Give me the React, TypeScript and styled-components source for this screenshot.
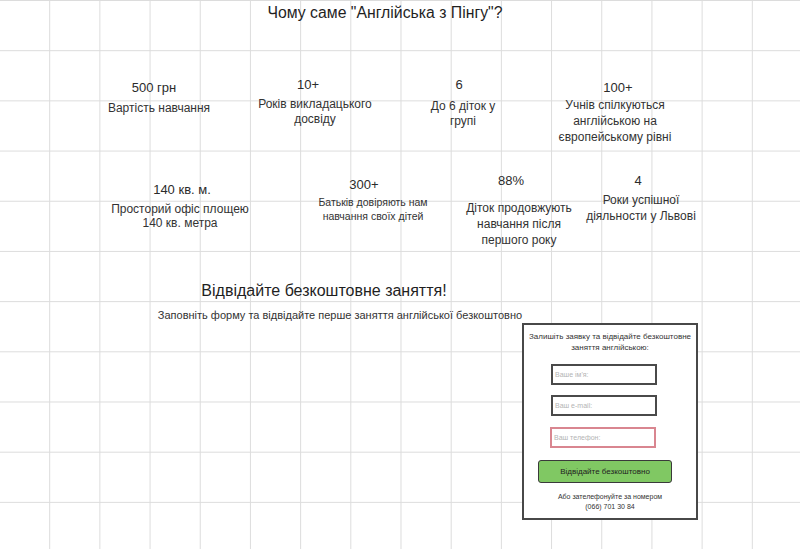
import styled, { createGlobalStyle } from 'styled-components';

const GlobalStyle = createGlobalStyle`
  html, body {
    margin: 0;
    padding: 0;
  }

  body {
    min-height: 100vh;
    font-family: "Liberation Sans", Arial, sans-serif;
    color: #2b2b2b;
    background-color: #ffffff;
    background-image:
      linear-gradient(to right, #dcdcdc 1px, transparent 1px),
      linear-gradient(to bottom, #dcdcdc 1px, transparent 1px);
    background-size: 50.2px 50.2px;
    background-position: -1px 0, 0 0;
  }
`;

const Page = styled.div`
  width: 800px;
  padding-top: 3px;
`;

const Title = styled.h1`
  width: 770px;
  margin: 0;
  font-size: 15.8px;
  font-weight: normal;
  line-height: 19px;
  text-align: center;
  color: #1f1f1f;
`;

const StatsRow = styled.div<{ $top: number }>`
  display: flex;
  align-items: flex-start;
  height: 100px;
  margin-top: ${(p) => p.$top}px;
`;

const Stat = styled.div<{ $w: number; $ml: number; $mt: number }>`
  width: ${(p) => p.$w}px;
  margin-left: ${(p) => p.$ml}px;
  margin-top: ${(p) => p.$mt}px;
  text-align: center;
`;

// $nudge moves the figure off the label's centre (negative = left)
const Value = styled.div<{ $nudge?: number }>`
  padding-left: ${(p) => Math.max(0, (p.$nudge ?? 0) * 2)}px;
  padding-right: ${(p) => Math.max(0, -(p.$nudge ?? 0) * 2)}px;
  font-size: 13px;
  line-height: 16px;
  color: #2b2b2b;
`;

const Label = styled.div<{ $gap: number; $size?: number; $lh?: number }>`
  margin-top: ${(p) => p.$gap}px;
  font-size: ${(p) => p.$size ?? 12}px;
  line-height: ${(p) => p.$lh ?? 15}px;
  color: #333;
`;

const Heading = styled.h2`
  width: 648px;
  margin: 11px 0 0;
  font-size: 16px;
  font-weight: normal;
  line-height: 20px;
  text-align: center;
  color: #1f1f1f;
`;

const Subtitle = styled.p`
  width: 680px;
  margin: 7.5px 0 0;
  font-size: 11px;
  line-height: 13px;
  text-align: center;
  color: #333;
`;

const FormBox = styled.form`
  box-sizing: border-box;
  width: 176px;
  margin: 1.5px 0 0 522px;
  padding: 5.5px 0 6px;
  border: 2px solid #484848;
  background: #ffffff;
  display: flex;
  flex-direction: column;
  align-items: flex-start;
`;

const FormNote = styled.p`
  align-self: stretch;
  margin: 0;
  padding: 0 3px;
  font-size: 8px;
  line-height: 11px;
  text-align: center;
  color: #333;
`;

const Field = styled.input<{ $mt: number; $ml: number; $invalid?: boolean }>`
  box-sizing: border-box;
  width: 106px;
  height: 21px;
  margin: ${(p) => p.$mt}px 0 0 ${(p) => p.$ml}px;
  padding: 0 2px;
  border: 2px solid ${(p) => (p.$invalid ? '#d98690' : '#4a4a4a')};
  border-radius: 0;
  background: #fff;
  font-family: "Liberation Sans", Arial, sans-serif;
  font-size: 7px;
  outline: none;

  &::placeholder {
    color: #b4b4b4;
  }
`;

const SubmitButton = styled.button`
  box-sizing: border-box;
  width: 134px;
  height: 23px;
  margin: 12px 0 0 14px;
  padding: 0;
  border: 1px solid #3a3a3a;
  border-radius: 3px;
  background: #80c863;
  font-family: "Liberation Sans", Arial, sans-serif;
  font-size: 8px;
  color: #222;
`;

const CallNote = styled.p`
  align-self: stretch;
  margin: 9px 0 0;
  font-size: 7px;
  line-height: 10px;
  text-align: center;
  color: #333;
`;

const App = (): JSX.Element => {
  return (
    <>
      <GlobalStyle />
      <Page>
        <Title>Чому саме "Англійська з Пінгу"?</Title>

        <StatsRow $top={48}>
          <Stat $w={130} $ml={94} $mt={10}>
            <Value $nudge={-5}>500 грн</Value>
            <Label $gap={4.5}>Вартість навчання</Label>
          </Stat>
          <Stat $w={120} $ml={31} $mt={7}>
            <Value $nudge={-7}>10+</Value>
            <Label $gap={4}>Років викладацького досвіду</Label>
          </Stat>
          <Stat $w={70} $ml={53} $mt={7}>
            <Value $nudge={-4}>6</Value>
            <Label $gap={6}>До 6 діток у групі</Label>
          </Stat>
          <Stat $w={120} $ml={57} $mt={10}>
            <Value $nudge={3}>100+</Value>
            <Label $gap={1} $lh={16}>Учнів спілкуються англійською на європейському рівні</Label>
          </Stat>
        </StatsRow>

        <StatsRow $top={0}>
          <Stat $w={150} $ml={105} $mt={12}>
            <Value $nudge={2}>140 кв. м.</Value>
            <Label $gap={3.5} $lh={14}>Просторий офіс площею 140 кв. метра</Label>
          </Stat>
          <Stat $w={124} $ml={56} $mt={7}>
            <Value $nudge={-9}>300+</Value>
            <Label $gap={2} $size={10.5} $lh={14}>Батьків довіряють нам навчання своїх дітей</Label>
          </Stat>
          <Stat $w={116} $ml={26} $mt={3}>
            <Value $nudge={-8}>88%</Value>
            <Label $gap={11} $lh={16}>Діток продовжують навчання після першого року</Label>
          </Stat>
          <Stat $w={116} $ml={6} $mt={3}>
            <Value $nudge={-3}>4</Value>
            <Label $gap={3} $lh={16}>Роки успішної діяльности у Львові</Label>
          </Stat>
        </StatsRow>

        <Heading>Відвідайте безкоштовне заняття!</Heading>
        <Subtitle>Заповніть форму та відвідайте перше заняття англійської безкоштовно</Subtitle>

        <FormBox onSubmit={(e) => e.preventDefault()}>
          <FormNote>Залишіть заявку та відвідайте безкоштовне заняття англійською:</FormNote>
          <Field $mt={11.5} $ml={27} placeholder="Ваше ім'я:" />
          <Field $mt={10} $ml={27} placeholder="Ваш e-mail:" />
          <Field $mt={11} $ml={26} $invalid placeholder="Ваш телефон:" />
          <SubmitButton type="submit">Відвідайте безкоштовно</SubmitButton>
          <CallNote>
            Або зателефонуйте за номером
            <br />
            (066) 701 30 84
          </CallNote>
        </FormBox>
      </Page>
    </>
  );
};

export default App;
